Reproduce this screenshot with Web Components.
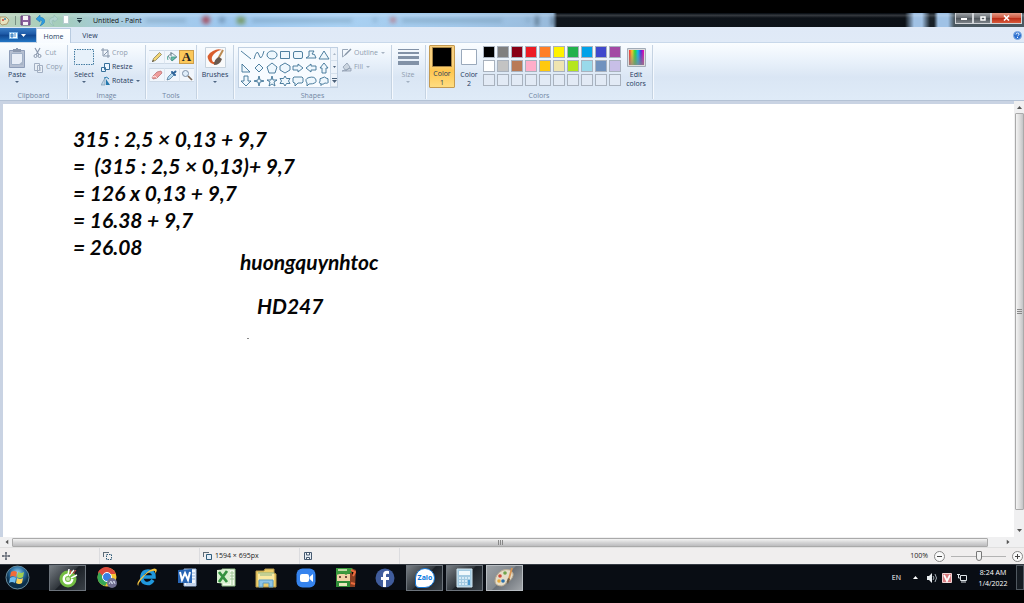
<!DOCTYPE html>
<html lang="en">
<head>
<meta charset="utf-8">
<title>Untitled - Paint</title>
<style>
html,body{margin:0;height:100%;background:#000}
body{font:7px/10px "Open Sans","Noto Sans",sans-serif;color:#1e395b;display:flex}
paint-desktop{flex:1}
</style>
</head>
<body>
<paint-desktop></paint-desktop>
<script>
const BASE = `*{box-sizing:border-box}button{font:inherit;color:inherit;background:none;border:0;padding:0;margin:0}svg{display:block;flex:none}[hidden]{display:none}`;
function define(name, css, html) {
  const t = document.createElement('template');
  t.innerHTML = `<style>${BASE}${css}</style>${html}`;
  customElements.define(name, class extends HTMLElement {
    constructor() {
      super();
      this.attachShadow({mode: 'open'}).append(t.content.cloneNode(true));
    }
    connectedCallback() {
      this.shadowRoot.querySelectorAll('[data-attr]').forEach(n => {
        n.textContent = this.getAttribute(n.dataset.attr) || '';
      });
    }
  });
}

/* Title bar with the quick access tools */
define('title-bar', `
:host{display:flex;height:14px;align-items:center;overflow:hidden;position:relative;color:#111;
 background:linear-gradient(#0000 0 1px,#ffffff30 2px,#0000 5px),linear-gradient(90deg,#bcd3bd 0,#a4cdbb 60px,#a5cbd2 95px,#a9cdec 150px,#9dc7ee 230px,#a9d1f3 340px,#a1c7e9 460px,#98badb 553px,#10161d 557px,#0b1016 905px,#a0c1e4 914px 922px,#182027 930px 934px,#9fc2e6 938px 948px,#4a5861 954px)}
.quick{display:flex;gap:4px;align-items:center;padding-left:0;width:93px}
h1{font:inherit;margin:0;flex:1;white-space:nowrap;padding-top:1px}
.back{position:absolute;inset:3px auto auto 0;filter:blur(2px)}
.win{display:flex;align-self:flex-start;margin-right:2px}
.win button{height:11px;width:18px;border:1px solid #d1d4d8;border-top:0;background:linear-gradient(#a3a7ab,#646a70 50%,#4e545a 52%,#7c8288);display:grid;place-items:center}
.win button:last-child{width:31px;background:linear-gradient(#e39a86,#ce543c 50%,#b92c16 52%,#d8593b)}
`, `
<svg class="back" width="560" height="10" aria-hidden="true"><g fill="#6788a0" opacity=".5"><rect x="146" y="3" width="40" height="3"/><rect x="252" y="3" width="100" height="3"/><rect x="402" y="3" width="100" height="3"/><circle cx="375" cy="4" r="2"/><circle cx="528" cy="4" r="2"/></g><circle cx="206" cy="4" r="4" fill="#a45062"/><circle cx="222" cy="4" r="3" fill="#7194b5"/><rect x="237" y="1" width="8" height="7" fill="#779b69"/><circle cx="393" cy="4" r="3" fill="#b58292"/><path d="M537 0V10M553 0V10" stroke="#334656" stroke-width="2"/></svg>
<div class="quick">
<svg width="11" height="11" viewBox="0 0 11 11"><path d="M0 2h6l3 3-2 4-5 1-2-2z" fill="#e8e3bf" stroke="#ad9b70"/><circle cx="3" cy="5" r="1" fill="#c43"/><circle cx="5" cy="4" r="1" fill="#3986b3"/></svg>
<svg width="1" height="11"><path d="M.5 1v9" stroke="#778f83"/></svg>
<svg width="11" height="11" viewBox="0 0 11 11"><path d="M1 1h9v9H1z" fill="#8b609d" stroke="#69447c"/><path d="M3 1h5v4H3zM3 7h5v3H3z" fill="#f7f2f7"/></svg>
<svg width="10" height="11" viewBox="0 0 10 11"><path d="M5 0L1 4l4 3V5q4 0 0 6 8-4 3-8L5 2z" fill="#2f9de0" stroke="#1975b6" stroke-width=".5"/></svg>
<svg width="10" height="11" viewBox="0 0 10 11"><path d="M5 0l4 4-4 3V5Q1 5 5 11-3 7 2 3l3-1z" fill="#b2d4ce" stroke="#8db5b1" stroke-width=".5"/></svg>
<svg width="7" height="10"><path d="M.5 .5h5v8h-5z" fill="#fff" stroke="#b7cdd0"/></svg>
<svg width="7" height="9" style="margin-left:2px"><path d="M1 2.500h5" stroke="#243b45"/><path d="M1 4h5L3.500 7z" fill="#243b45"/></svg>
</div>
<h1>Untitled - Paint</h1>
<div class="win">
<button aria-label="Minimize"><svg width="8" height="6"><path d="M1 3h6v2H1z" fill="#fff"/></svg></button>
<button aria-label="Maximize"><svg width="7" height="7"><path d="M2 2h4v3H2z" fill="none" stroke="#fff" stroke-width="1.500"/></svg></button>
<button aria-label="Close"><svg width="7" height="6"><path d="M1 .5L6 5.500M6 .5L1 5.500" stroke="#fff" stroke-width="1.600"/></svg></button>
</div>`);

define('ribbon-tabs', `
:host{display:flex;height:16px;background:linear-gradient(#dfe9f7,#e0eaf7);border-bottom:1px solid #c8d8ea}
button{height:16px}
.file{width:36px;background:linear-gradient(#3b7ec6,#1c58a6 45%,#10458f 50%,#2376c5);display:flex;align-items:center;justify-content:center;gap:3px;margin-top:1px;height:14px;padding-right:1px}
.tab{width:35px;padding-top:1px}.on{background:linear-gradient(#fff,#f7fbff);border:1px solid #b9cbe0;border-bottom:0;margin-top:1px;height:15px}
.view{width:38px;padding-top:2px}
.help{margin-left:auto;width:14px;display:grid;place-items:center}
`, `
<button class="file" aria-label="Paint menu"><svg width="9" height="7"><path d="M.5 .5h8v6h-8z" fill="#fff" stroke="#7eb8e9"/><path d="M2 2h2v3H2zM5 2h2M5 4h2" stroke="#4286c5" fill="#76addd"/></svg><svg width="5" height="3"><path d="M0 0h5L2.500 3z" fill="#fff"/></svg></button>
<button class="tab on">Home</button><button class="tab view">View</button>
<button class="help" aria-label="Help"><svg width="9" height="9" viewBox="0 0 9 9"><circle cx="4.500" cy="4.500" r="4" fill="#2b6fd0" stroke="#86ade0"/><path d="M3 3.500q0-1.500 1.600-1.500T6 3.400Q6 4 4.600 5M4.500 6v1" fill="none" stroke="#fff"/></svg></button>`);

/* A captioned ribbon section; width comes from --w */
define('ribbon-group', `
:host{display:flex;flex-direction:column;width:var(--w);flex:none;height:54px;position:relative;border-right:1px solid #c5d3e2;box-shadow:1px 0 #f5f9fe}
.body{display:flex;flex:1;align-items:flex-start;padding:0 var(--pr,2px) 0 var(--pl,3px);gap:var(--gap,3px)}
.cap{text-align:center;color:#7186a3;height:11px;line-height:11px;margin-bottom:-2px}
`, `<div class="body"><slot></slot></div><div class="cap" data-attr="label"></div>`);

/* Tall button: icon, caption and optional arrow */
define('big-tool', `
:host{display:block;width:var(--bw,26px)}
button{width:100%;height:44px;display:flex;flex-direction:column;align-items:center;color:var(--tc,#1e395b);border-radius:1px}
.ic{height:24px;display:grid;place-items:center}
.tx{line-height:8px;white-space:pre-line;margin-top:2px}
i{border:2px solid transparent;border-top-color:currentColor;border-bottom:0;margin-top:2px;opacity:.75}
:host([noarrow]) i{display:none}
:host([noarrow]) .tx{margin-top:1px;line-height:9px}
:host([on]) button{background:linear-gradient(#f6ce80,#fbd27b 45%,#ffc64f 60%,#ffdd80);border:1px solid #c49a50;height:43px}
:host([on]) .ic{height:23px}
`, `<button><span class="ic"><slot></slot></span><span class="tx" data-attr="label"></span><i></i></button>`);

define('small-tool', `
:host{display:block;height:14px}
button{display:flex;align-items:center;gap:2px;height:14px;color:var(--tc,#1e395b);white-space:nowrap}
i{border:2px solid transparent;border-top-color:currentColor;border-bottom:0;margin-left:1px;display:none;opacity:.75}
:host([arrow]) i{display:block}
`, `<button><slot></slot><span data-attr="label"></span><i></i></button>`);

define('tool-grid', `
:host{display:grid;grid-template:14px 14px/repeat(3,15px);row-gap:4px;padding-top:5px}
button{display:grid;place-items:center;border:1px solid #cdd9e6;border-width:1px 0;background:#f1f6fc}
button+button{border-left:1px solid #dde6f0}
.on{background:#fcc85a;border:1px solid #cb9d4b}
b{font:bold 13px/12px "Liberation Serif",serif;color:#222}
`, `
<button aria-label="Pencil"><svg width="12" height="12"><path d="M1.500 10.500l1-3 6-6 2 2-6 6z" fill="#f2d574" stroke="#7c734c" stroke-width=".7"/><path d="M1 11l1-2 1 1z" fill="#333"/></svg></button>
<button aria-label="Fill"><svg width="12" height="12"><path d="M2 5l4-3 5 4-5 4z" fill="#e8f1f6" stroke="#667d8a" stroke-width=".8"/><path d="M2 5q-1 2 0 4M5 6l5 0-4 4z" stroke="#3d9c88" fill="#6ab9a6" stroke-width=".8"/><path d="M5 5V1" stroke="#667d8a"/></svg></button>
<button class="on" aria-label="Text"><b>A</b></button>
<button aria-label="Eraser"><svg width="12" height="12"><path d="M1 8l5-5 4-1 1 2-5 5-4 1z" fill="#ef9d9c" stroke="#bd7475" stroke-width=".8"/><path d="M1 8l3-1 2 2" fill="none" stroke="#fff" stroke-width=".7"/></svg></button>
<button aria-label="Color picker"><svg width="12" height="12"><path d="M1 11l1-3 4-4 2 2-4 4z" fill="#b5dbf2" stroke="#456f91" stroke-width=".7"/><path d="M6 3l3 3M7.500 4.500l2-2" stroke="#2f659b" stroke-width="2" stroke-linecap="round"/></svg></button>
<button aria-label="Magnifier"><svg width="12" height="12"><circle cx="4.500" cy="4.500" r="3" fill="#e0eefb" stroke="#7c8fa6"/><path d="M7 7l4 4" stroke="#7a6655" stroke-width="1.700"/></svg></button>`);

/* Shape gallery: outlines are generated from one list */
const SHAPES = [['Line','M1 2l10 8'],['Curve','M1 10Q4-1 6 6T11 2'],['Oval','M6 2a5 4 0 1 0 .1 0z'],['Rectangle','M1.500 2.500h9v7h-9z'],['Rounded rectangle','M3 2.500h6q1.500 0 1.500 1.500v4q0 1.500-1.500 1.500H3Q1.500 9.500 1.500 8V4Q1.500 2.500 3 2.500z'],['Polygon','M4 2h5L7 5q3-1 4 4H1l3-2z'],['Triangle','M6 2l5 8H1z'],
['Right triangle','M2 2v8h8z'],['Diamond','M6 2l4 4-4 4-4-4z'],['Pentagon','M6 1l5 4-2 6H3L1 5z'],['Hexagon','M6 1l5 3v4l-5 3-5-3V4z'],['Right arrow','M1 4h5V2l5 4-5 4V8H1z'],['Left arrow','M11 4H6V2L1 6l5 4V8h5z'],['Up arrow','M4 11V6H2l4-5 4 5H8v5z'],
['Down arrow','M4 1v5H1l5 5 5-5H8V1z'],['Four-point star','M6 1l1 4 4 1-4 1-1 4-1-4-4-1 4-1z'],['Five-point star','M6 1l1 4h4L8 7l1 4-3-2-3 2 1-4-3-2h4z'],['Six-point star','M6 1l1.500 2.500H11L9.500 6 11 8.500H7.500L6 11 4.500 8.500H1L2.500 6 1 3.500h3.500z'],['Rounded callout','M2 2h8l1 1v4L10 8H6l-3 3V8H2L1 7V3z'],['Oval callout','M4 9l-2 2V8Q-1 4 4 2.500 10 1 11 5T4 9z'],['Cloud callout','M3 11V9Q0 8 2 6q-1-3 2-3 3-2 4 0 3 0 2 3 1 3-3 2Q5 10 3 9']];
define('shape-gallery', `
:host{display:grid;grid-template-columns:repeat(7,13px) 7px;grid-template-rows:repeat(3,13px);border:1px solid #c0d0e2;background:#f7fbff;margin-top:2px}
button{display:grid;place-items:center}
.sc{border-left:1px solid #cbd9e8;border-bottom:1px solid #d5e0ec;background:#edf3fa}
`, SHAPES.map(([n,d],i) => `<button aria-label="${n}"><svg width="12" height="12"><path d="${d}" fill="#eef7fd" ${i<2?'fill-opacity="0"':''} stroke="#3c7295" stroke-width=".9"/></svg></button>` +
 (i%7===6 ? `<button class="sc" aria-label="${['Scroll up','Scroll down','More'][(i/7)|0]}"><svg width="5" height="6">${['<path d="M1 4h3L2.500 2z" fill="#a9b6c5"/>','<path d="M1 2h3L2.500 4z" fill="#4b6079"/>','<path d="M0 1.500h5" stroke="#4b6079"/><path d="M0 3h5L2.500 6z" fill="#4b6079"/>'][(i/7)|0]}</svg></button>` : '')).join(''));

const COLORS = ['#000','#7f7f7f','#880015','#ed1c24','#ff7f27','#fff200','#22b14c','#00a2e8','#3f48cc','#a349a4','#fff','#c3c3c3','#b97a57','#ffaec9','#ffc90e','#efe4b0','#b5e61d','#99d9ea','#7092be','#c8bfe7',...Array(10).fill('#e2eaf5')];
define('color-palette', `
:host{display:grid;grid-template:repeat(3,12px)/repeat(10,12px);gap:2px;padding-top:1px}
button{border:1px solid #a9b2be}
`, COLORS.map((c,i) => `<button style="background:${c}" aria-label="Color ${i+1}"></button>`).join(''));

define('paint-ribbon', `
:host{display:flex;height:58px;background:linear-gradient(#fafdff,#eaf2fb 30%,#dae6f4 60%,#dfebf8);padding-top:2px;border-bottom:1px solid #b4c2d5}
.col{display:flex;flex-direction:column;padding-top:1px}
.off{--tc:#8f9daf}
.c1{--w:68px;--pl:4px}.c2{--w:78px;--pl:3px;--gap:4px}.c3{--w:51px;--pl:3px}.c4{--w:37px;--pl:3px}.c5{--w:158px;--pl:4px}.c6{--w:34px;--pl:3px}.c7{--w:227px;--pl:3px;--gap:1px}
shape-gallery{flex:none}
`, `
<ribbon-group class="c1" label="Clipboard">
<big-tool label="Paste"><svg width="20" height="21"><path d="M2.500 3.500h15v17h-15z" fill="#b5bfd1" stroke="#8e9db8"/><path d="M4.500 6.500h11v11h-11z" fill="#e8eef7" stroke="#a0b0c7"/><path d="M6 5V2h3V1h2v1h3v3z" fill="#8b98ae"/><path d="M11 18l5-4v4z" fill="#a7b4c7"/></svg></big-tool>
<div class="col off"><small-tool label="Cut"><svg width="10" height="12"><path d="M2 1l4 7M7 1L3 8" stroke="#8b99ae" stroke-width="1.200"/><circle cx="2.500" cy="9" r="1.500" fill="none" stroke="#8b99ae"/><circle cx="6.500" cy="9" r="1.500" fill="none" stroke="#8b99ae"/></svg></small-tool>
<small-tool label="Copy"><svg width="11" height="11"><path d="M1.500 1.500h5v7h-5zM4.500 3.500h5v7h-5z" fill="#e9eff6" stroke="#a2afc2"/><path d="M6 6h2M6 8h2" stroke="#a2afc2"/></svg></small-tool></div>
</ribbon-group>
<ribbon-group class="c2" label="Image">
<big-tool label="Select"><svg width="20" height="18"><path d="M.5 1.500h19v15H.5z" fill="#e7f1fa" stroke="#437ba1" stroke-dasharray="1.500 1"/></svg></big-tool>
<div class="col"><small-tool class="off" label="Crop"><svg width="9" height="10"><path d="M2 0v8h7M0 2h7v8M3 7l4-4" fill="none" stroke="#8796ab"/></svg></small-tool>
<small-tool label="Resize"><svg width="9" height="9"><path d="M3.500 .5h5v6h-5zM.5 4.500h4v4h-4z" fill="#eaf4ff" stroke="#376f9a"/></svg></small-tool>
<small-tool label="Rotate" arrow><svg width="9" height="10"><path d="M4 2v7H0z" fill="#bfd5e7" stroke="#7392a9" stroke-width=".6"/><path d="M5 3v6h4z" fill="#2478ad"/><path d="M3 2q3-2 5 1" fill="none" stroke="#2478ad"/></svg></small-tool></div>
</ribbon-group>
<ribbon-group class="c3" label="Tools"><tool-grid></tool-grid></ribbon-group>
<ribbon-group class="c4" label=""><big-tool label="Brushes" style="--bw:30px"><svg width="21" height="21"><path d="M.5 .5h20v20H.5z" fill="#f9fafb" stroke="#c6d2dd"/><path d="M4 14Q0 8 8 4q5-3 9-1-4 0-8 4-4 4-1 8l5 0q-5 5-9-1z" fill="#d95d2c"/><path d="M18 3l-5 9" stroke="#bb8b53" stroke-width="2"/><path d="M14 10q-5 2-5 8 6 0 8-6z" fill="#695a50"/></svg></big-tool></ribbon-group>
<ribbon-group class="c5" label="Shapes"><shape-gallery></shape-gallery>
<div class="col off"><small-tool label="Outline" arrow><svg width="11" height="10"><path d="M1.500 9V1.500H7M1 9l2-1 6-6" fill="none" stroke="#9aa8b9"/><path d="M4 7l6-6" stroke="#8493a5" stroke-width="1.500"/></svg></small-tool><small-tool label="Fill" arrow><svg width="11" height="10"><path d="M2 5l4-4 3 4-4 4zM1 9h9V6z" fill="#cbd5e0" stroke="#8f9db0" stroke-width=".8"/></svg></small-tool></div></ribbon-group>
<ribbon-group class="c6 off" label=""><big-tool label="Size"><svg width="21" height="18"><path d="M0 1.500h21" stroke="#8292a7"/><path d="M0 5h21" stroke="#8292a7" stroke-width="2"/><path d="M0 9.500h21" stroke="#8292a7" stroke-width="3"/><path d="M0 15h21" stroke="#8292a7" stroke-width="4"/></svg></big-tool></ribbon-group>
<ribbon-group class="c7" label="Colors"><big-tool on noarrow label="Color&#10;1"><svg width="20" height="20"><path d="M.5 .5h19v19H.5z" fill="#000" stroke="#a48346"/></svg></big-tool>
<big-tool noarrow label="Color&#10;2"><svg width="16" height="16"><path d="M.5 .5h15v15H.5z" fill="#fff" stroke="#9aa9bb"/></svg></big-tool>
<color-palette></color-palette>
<big-tool noarrow label="Edit&#10;colors" style="--bw:28px"><svg width="19" height="19"><defs><linearGradient id="r"><stop stop-color="#f23"/><stop offset=".2" stop-color="#fc2"/><stop offset=".4" stop-color="#2d3"/><stop offset=".6" stop-color="#0bf"/><stop offset=".8" stop-color="#52d"/><stop offset="1" stop-color="#f0a"/></linearGradient><linearGradient id="g" x2="0" y2="1"><stop stop-color="#888" stop-opacity="0"/><stop offset="1" stop-color="#888" stop-opacity=".8"/></linearGradient></defs><path d="M.5 .5h18v18H.5z" fill="#ddd" stroke="#a2acb8"/><path d="M2 2h15v15H2z" fill="url(#r)"/><path d="M2 2h15v15H2z" fill="url(#g)"/></svg></big-tool></ribbon-group>`);

define('scroll-bar', `
:host{display:flex;flex-direction:column;width:10px;background:#f0f0f1;align-items:center}
:host([horizontal]){flex-direction:row;width:auto;height:10px;margin-right:10px}
button{width:9px;height:12px;display:grid;place-items:center;flex:none}
.thumb{flex:1;width:9px;border:1px solid #aaa;border-radius:1px;background:linear-gradient(90deg,#f3f3f3,#dedede 50%,#c4c4c6);display:grid;place-items:center;margin-bottom:15px}
:host([horizontal]) button{width:12px;height:9px}
:host([horizontal]) .thumb{width:auto;height:9px;background:linear-gradient(#f3f3f3,#d5d5d6 50%,#bcbcbe);margin:0 14px 0 0}
:host([horizontal]) svg{transform:rotate(-90deg)}
`, `<button aria-label="Scroll back"><svg width="5" height="4"><path d="M0 4h5L2.500 1z" fill="#555"/></svg></button>
<div class="thumb"><svg width="5" height="5"><path d="M0 .5h5M0 2.500h5M0 4.500h5" stroke="#888"/></svg></div>
<button aria-label="Scroll forward"><svg width="5" height="4"><path d="M0 0h5L2.500 3z" fill="#555"/></svg></button>`);

/* The drawing surface: texts sit freely where they were typed */
define('paint-canvas', `
:host{flex:1;min-height:0;display:flex;background:#c9d3e3}
.sheet{flex:1;background:#fff;margin:3px 0 0 3px;position:relative;color:#050505;font:italic bold 21px/27px Lato,sans-serif;padding:21px 0 0 70px;white-space:pre}
p{margin:0}
.name{position:absolute;left:237px;top:144px}
.tag{position:absolute;left:254px;top:188px}
.dot{position:absolute;left:244px;top:234px;width:2px;height:1px;background:#888}
`, `<div class="sheet"><p>315 : 2,5 × 0,13 + 9,7</p><p>=  (315 : 2,5 × 0,13)+ 9,7</p><p>= 126 x 0,13 + 9,7</p><p>= 16.38 + 9,7</p><p>= 26.08</p><p class="name">huongquynhtoc</p><p class="tag">HD247</p><span class="dot"></span></div><scroll-bar></scroll-bar>`);

define('status-bar', `
:host{display:flex;height:17px;background:#f0eeee;align-items:center;color:#222;border-top:1px solid #e0e0e0}
.cell{width:100px;height:100%;display:flex;align-items:center;gap:3px;padding-left:3px;border-right:1px solid #dcdcdf}
.zoom{margin-left:auto;display:flex;align-items:center;gap:6px;padding-right:1px}
button{width:11px;height:11px;border:1px solid #888;border-radius:50%;display:grid;place-items:center;background:#fafafa}
input{appearance:none;width:55px;height:11px;margin:0;background:linear-gradient(#b3b3b3,#b3b3b3) center/100% 1px no-repeat}
input::-webkit-slider-thumb{appearance:none;width:6px;height:10px;border:1px solid #777;border-radius:1px 1px 3px 3px;background:#f2f2f2}
`, `
<div class="cell" style="padding-left:2px"><svg width="8" height="8"><path d="M4 0v8M0 4h8M3 1h2M3 7h2M1 3v2M7 3v2" stroke="#4a5360"/></svg></div>
<div class="cell"><svg width="10" height="9"><path d="M3.500 2.500h5v5h-5z" fill="none" stroke="#315d7a" stroke-dasharray="1.500 1"/><path d="M.5 0v5M1 .5h5" stroke="#5d6b77"/></svg></div>
<div class="cell"><svg width="9" height="9"><path d="M3.500 2.500h5v5h-5z" fill="#e3eef9" stroke="#315d7a"/><path d="M.5 0v5M1 .5h5" stroke="#5d6b77"/></svg>1594 × 695px</div>
<div class="cell" style="padding-left:4px"><svg width="8" height="8"><path d="M.5 .5h7v7h-7z" fill="#e6edf4" stroke="#475a70"/><path d="M2.500 1v2h3V1M2.500 7V5.500h3V7" stroke="#475a70" fill="#fff"/></svg></div>
<div class="zoom"><label for="z">100%</label><button aria-label="Zoom out"><svg width="5" height="5"><path d="M0 2.500h5" stroke="#444"/></svg></button><input id="z" type="range" value="50"><button aria-label="Zoom in"><svg width="5" height="5"><path d="M0 2.500h5M2.500 0v5" stroke="#444"/></svg></button></div>`);

define('task-button', `
:host{display:block;width:37px;height:26px}
button{width:100%;height:100%;display:grid;place-items:center;position:relative}
:host([open]) button{border:1px solid #6d747c;background:linear-gradient(135deg,#777d83,#31373d 48%,#1b2026 50%,#394047)}
:host([active]) button{border:1px solid #b8bdc2;background:linear-gradient(135deg,#9ca1a6,#82888e 48%,#696f76 50%,#a1a5a9)}
`, `<button><slot></slot></button>`);

define('task-bar', `
:host{display:flex;height:26px;background:#090d14;border-top:1px solid #343a42;color:#fff;align-items:center}
.start{width:49px;padding-left:5px}
.apps{display:flex;justify-content:space-between;width:474px}
.tray{margin-left:auto;display:flex;align-items:center;gap:7px}
.clock{width:34px;text-align:center;line-height:11px;margin:0 0 0 2px}
.desk{width:8px;height:25px;border:1px solid #505860;background:#161c23;margin-left:-1px}
.z{font-weight:bold;color:#0878df;background:#fff;border:1px solid #1476d6;border-radius:50% 50% 50% 20%;width:20px;height:20px;line-height:17px;display:block;text-align:center}
`, `
<button class="start" aria-label="Start"><svg width="25" height="25" viewBox="0 0 25 25"><defs><radialGradient id="s" cy=".3"><stop stop-color="#98d0ed"/><stop offset=".6" stop-color="#286da0"/><stop offset="1" stop-color="#0d304b"/></radialGradient></defs><circle cx="12.500" cy="12.500" r="11.500" fill="url(#s)" stroke="#688a9b"/><path d="M6 7q3-2 6 0l-1 5q-3-2-6 0z" fill="#f26b38"/><path d="M13 7q3 2 6 0l-1 5q-3 2-6 0z" fill="#a1cf51"/><path d="M5 13q3-2 6 0l-1 5q-3-2-6 0z" fill="#70bdf0"/><path d="M12 13q3 2 6 0l-1 5q-3 2-6 0z" fill="#ffd359"/></svg></button>
<div class="apps">
<task-button open><svg width="20" height="20"><circle cx="10" cy="11" r="8.500" fill="#73bd43"/><path d="M10 5.500A5.500 5.500 0 1 0 15.500 11h-2.500a3 3 0 1 1-3-3z" fill="#fff"/><circle cx="10" cy="11" r="2" fill="#cdeab4"/><path d="M11 8l5-6M10 7l1-6M13 10l6-3" stroke="#fff" stroke-width="1.500"/><path d="M12 6l1-4M15 6l3-4" stroke="#dc4e42"/></svg></task-button>
<task-button><svg width="21" height="21"><circle cx="10" cy="10" r="9.500" fill="#f4c533"/><path d="M10 10H2L1 5Q7-3 15 2q3 2 4 5h-9z" fill="#dc4a3d"/><path d="M10 14L2 5Q-3 15 8 19l3-5z" fill="#37a755"/><circle cx="10" cy="10" r="4.500" fill="#377fe5" stroke="#fff"/><circle cx="15" cy="16" r="5" fill="#716f91"/><path d="M12 17l2-3 1 3 2-3 1 3" fill="none" stroke="#cbd0e4"/></svg></task-button>
<task-button><svg width="22" height="21"><path d="M17 13q-3 5-8 3-4-2-3-7 1-5 6-5 6 0 6 6H7" fill="none" stroke="#2098dc" stroke-width="3.500"/><path d="M3 19Q-2 17 8 8q9-8 12-6 2 1-1 5 1-4-2-3-5 0-12 9-4 5-2 6z" fill="#f3c342"/></svg></task-button>
<task-button><svg width="20" height="20"><path d="M7 1h12v17H7z" fill="#f3f8fe" stroke="#9ab5da"/><path d="M15 5h3M15 8h3M15 11h3M9 16h9" stroke="#91aed7"/><path d="M1 2l14-1v14L1 15z" fill="#2865b4"/><path d="M3 4l2 8 3-7 3 7 2-8" fill="none" stroke="#fff" stroke-width="2"/></svg></task-button>
<task-button><svg width="20" height="20"><path d="M6 1h13v17H6z" fill="#f2faec" stroke="#90bf86"/><path d="M13 5h5M13 8h5M13 11h5M16 3v14" stroke="#9fc896"/><path d="M1 2l13-1v15L1 15z" fill="#d9efd0"/><path d="M3 4l8 10M11 3L3 14" stroke="#349140" stroke-width="2.800"/></svg></task-button>
<task-button><svg width="22" height="20"><path d="M1 3h8l1-2h9v4l2 1v13H1z" fill="#edcd69" stroke="#b99b4a"/><path d="M3 5h16v8H3z" fill="#fae9a2"/><path d="M3 5h16M5 7h12" stroke="#8ab484"/><path d="M4 19v-7h14v7h-4v-4H8v4z" fill="#8dc5e7" stroke="#5a9bc4"/></svg></task-button>
<task-button><svg width="20" height="20"><rect x=".5" y=".5" width="19" height="19" rx="6" fill="#3583ee"/><rect x="4" y="6" width="9" height="8" rx="2" fill="#fff"/><path d="M13.500 9L17 6v8l-3.500-3z" fill="#fff"/></svg></task-button>
<task-button><svg width="21" height="21"><path d="M1 1h15l5 2-1 17H1z" fill="#8b3f22"/><path d="M1 1h14v19H1z" fill="#2f8b37"/><path d="M2 7h13v7H2z" fill="#f0d3a8"/><path d="M1 1h16l2 4-5 1-3 2-3-2-7 2z" fill="#3b9a3e"/><path d="M3 3h9" stroke="#e9efc5" stroke-width="1.500"/><path d="M5 9v2M11 9v2" stroke="#48231e" stroke-width="1.500"/><path d="M16 3l4 2-2 4M16 16l4 1" stroke="#ed6b3d" stroke-width="2"/><path d="M4 16h8v3H4z" fill="#e8e6bb"/></svg></task-button>
<task-button><svg width="20" height="20"><circle cx="10" cy="10" r="9.500" fill="#405c9c"/><path d="M11 19v-7h3V9h-3V7q0-2 3-1V3q-6-1-6 4v2H6v3h2v7z" fill="#fff"/></svg></task-button>
<task-button open><span class="z">Zalo</span></task-button>
<task-button open><svg width="17" height="20"><path d="M1 1h15v18H1z" fill="#a3cae1" stroke="#d3e7f1"/><path d="M3 3h11v4H3z" fill="#eff8fc"/><g fill="#d5eaf6"><path d="M3 9h2v2H3zM6 9h2v2H6zM9 9h2v2H9zM12 9h2v2h-2zM3 12h2v2H3zM6 12h2v2H6zM9 12h2v2H9zM3 15h2v2H3zM6 15h2v2H6zM9 15h2v2H9z"/></g><path d="M12 12h2v5h-2z" fill="#4e9bd0"/></svg></task-button>
<task-button open active><svg width="21" height="21"><path d="M3 8Q8 1 16 3q5 3 2 8-1 3-5 3-1 4-5 5-7 0-7-5 0-3 2-6z" fill="#e5ddc9" stroke="#b9aa91"/><circle cx="6" cy="9" r="1.800" fill="#cf4a3b"/><circle cx="11" cy="6" r="1.800" fill="#70a34b"/><circle cx="5" cy="14" r="1.800" fill="#e6a93b"/><circle cx="9" cy="14" r="1.800" fill="#286fac"/><path d="M18 1l-4 14" stroke="#d79453" stroke-width="1.800"/><path d="M14 11l2 1-2 5q-2-2 0-6z" fill="#71614b"/></svg></task-button>
</div>
<div class="tray"><span>EN</span>
<svg width="10" height="9" style="margin-left:2px"><path d="M3 6h5L5.500 3z" fill="#fff"/></svg>
<svg width="10" height="10"><path d="M0 3h2l3-3v10L2 7H0z" fill="#e9edf0"/><path d="M6 3q2 2 0 4M8 1q3 4 0 8" fill="none" stroke="#ccd3d9" stroke-width=".8"/></svg>
<svg width="10" height="10" style="margin-left:-2px"><path d="M.5 .5h9v9h-9z" fill="#d87c80" stroke="#f0d3d3"/><path d="M2 2l3 6 3-6" fill="none" stroke="#fff" stroke-width="1.700"/></svg>
<svg width="10" height="10" style="margin-left:-2px"><path d="M3.500 2.500h6v5h-6zM4 9h5M0 1.500h3M1.500 1v4h2" fill="none" stroke="#dfe4e8"/></svg>
<div class="clock">8:24 AM<br>1/4/2022</div><button class="desk" aria-label="Show desktop"></button></div>`);

define('paint-desktop', `
:host{display:flex;flex-direction:column;padding:13px 0;background:#000;overflow:hidden}
.bottom{background:#f0f0f1}
`, `<title-bar></title-bar><ribbon-tabs></ribbon-tabs><paint-ribbon></paint-ribbon><paint-canvas></paint-canvas><div class="bottom"><scroll-bar horizontal></scroll-bar></div><status-bar></status-bar><task-bar></task-bar>`);
</script>
</body>
</html>
